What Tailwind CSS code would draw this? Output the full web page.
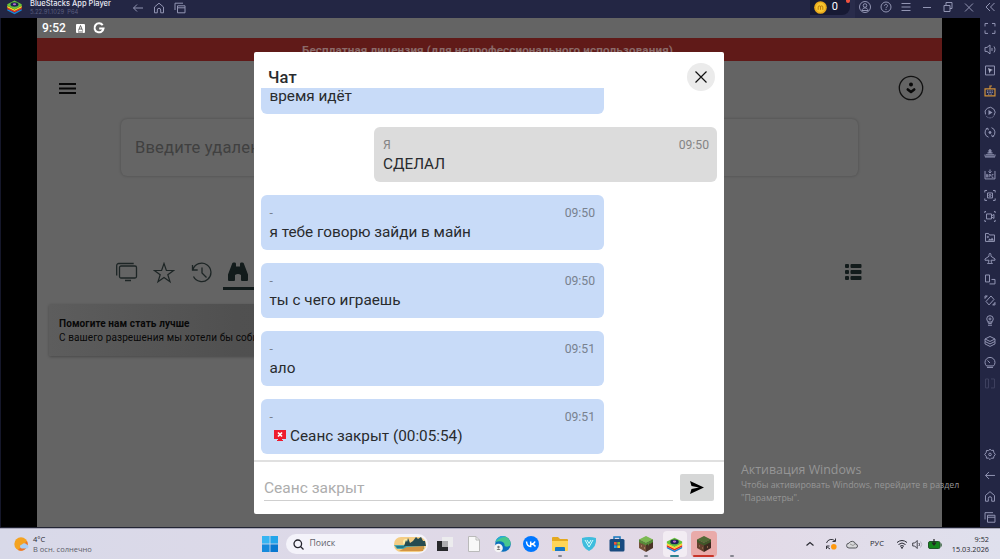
<!DOCTYPE html>
<html lang="ru">
  <head>
    <meta charset="UTF-8" />
    <title>BlueStacks App Player</title>
    <script src="https://cdn.jsdelivr.net/npm/@tailwindcss/browser@4"></script>
  </head>
  <body class="overflow-hidden bg-black font-['Roboto','Noto_Sans',sans-serif]">
    <!-- общие фигуры -->
    <svg class="hidden">
      <symbol id="home" viewBox="0 0 12 12"><path d="M1.500 5 6 1.200 10.500 5v5.800H7.700V8a1.700 1.700 0 0 0-3.400 0v2.800H1.500z" /></symbol>
      <symbol id="back" viewBox="0 0 12 12"><path d="M11 6H1.500M5 2.500 1.500 6 5 9.500" /></symbol>
      <symbol id="windows" viewBox="0 0 12 12"><path d="M3.500 3.800h7.500v7H3.500zM3.500 5.800H11M1 8V1.200h8" /></symbol>
      <symbol id="stack" viewBox="0 0 20 20">
        <path d="m1 12.500 9 4.500 9-4.500v2L10 19l-9-4.500z" fill="#1686d9" />
        <path d="m1 10.500 9 4.500 9-4.500v2L10 17l-9-4.500z" fill="#e02d24" />
        <path d="m1 8.500 9 4.500 9-4.500v2L10 15l-9-4.500z" fill="#ffd321" />
        <path d="m10 2 9 4.500v2L10 13 1 8.500v-2z" fill="#67c33b" />
        <ellipse cx="10" cy="7" rx="5" ry="2.800" fill="#1c2452" />
        <ellipse cx="10" cy="6.500" rx="2" ry="1.300" fill="#b66ad0" />
      </symbol>
    </svg>

    <div class="relative flex h-[559px] w-[1000px] flex-col">
      <!-- заголовок окна -->
      <header class="flex h-[18px] shrink-0 items-center bg-[#232644] text-[#9295b3]">
        <svg class="ml-[6px] h-4 w-[17px] -translate-y-[2px]"><use href="#stack" /></svg>
        <div class="ml-[7px] w-[102px] -translate-y-px font-['Inter',sans-serif] whitespace-nowrap">
          <div class="text-[7.500px] leading-[8px] font-medium text-[#e8e8f2]">BlueStacks App Player</div>
          <div class="text-[5.800px] leading-[8px] text-[#5b5e7f]">5.22.91.1029&nbsp; P64</div>
        </div>
        <div class="flex -translate-y-[1px] gap-[9px] fill-none stroke-[#9295b3]">
          <svg class="size-[12px]"><use href="#back" /></svg>
          <svg class="size-[12px]"><use href="#home" /></svg>
          <svg class="size-[12px]"><use href="#windows" /></svg>
        </div>
        <div class="relative ml-auto flex h-full w-[45px] items-start bg-[#292c4b]">
          <div class="flex h-[15px] w-10 items-center rounded-br-lg bg-[#171a34] pl-[4px]">
            <svg class="size-[13px]" viewBox="0 0 14 14">
              <circle cx="7" cy="7" r="6.800" fill="#e9a91c" />
              <circle cx="7" cy="7" r="5" fill="#f7c52f" />
              <path d="M4.500 9.500V6.500a1.200 1.200 0 0 1 2.500 0v3m0-3a1.200 1.200 0 0 1 2.500 0v3" fill="none" stroke="#b87508" />
            </svg>
            <span class="ml-[5px] text-[11px] text-white">0</span>
          </div>
          <div class="absolute top-0 right-[5px] h-[3px] w-[4px] rounded-b-full bg-[#f0523f]"></div>
        </div>
        <div class="ml-[4px] mr-[4px] flex -translate-y-[2px] items-center gap-[8.900px] fill-none stroke-[#9295b3]">
          <svg class="size-[12px]" viewBox="0 0 12 12"><circle cx="6" cy="6" r="5.500" /><circle cx="6" cy="4.500" r="1.800" /><path d="M3 9.500c.3-3.500 5.700-3.500 6 0z" /></svg>
          <svg class="size-[12px]" viewBox="0 0 12 12"><circle cx="6" cy="6" r="5" /><path d="M4.500 4.800c0-2 3-2 3 0C7.500 6 6 5.800 6 7.200M6 8v1" /></svg>
          <svg class="size-[12px]" viewBox="0 0 12 12"><path d="M1.500 2.500h9M1.500 6h9M1.500 9.500h9" /></svg>
          <svg class="size-[12px]" viewBox="0 0 12 12"><path d="M2 6.500h8" /></svg>
          <svg class="size-[12px]" viewBox="0 0 12 12"><path d="M2 4.500h6v6H2zM4 4.500v-3h6v6H8" /></svg>
          <svg class="size-[12px]" viewBox="0 0 12 12"><path d="m2 2.500 8 8m0-8-8 8" /></svg>
          <svg class="size-[12px]" viewBox="0 0 12 12"><path d="M6 2 2 6l4 4m4.500-8-4 4 4 4" /></svg>
        </div>
      </header>

      <main class="flex h-[510px] shrink-0 border-b border-[#222433]">
        <div class="w-[37px] border-l border-[#15172a] bg-black"></div>

        <!-- экран приложения -->
        <section class="w-[905px] bg-[#646464]">
          <div class="flex h-5 items-center pl-[5px] text-white">
            <span class="text-[12px] font-medium tracking-[.1px]">9:52</span>
            <svg class="ml-[10px] size-[9px]" viewBox="0 0 9 9"><rect width="9" height="9" rx="1" fill="#fff" /><path d="m2.500 6.500 2-5 2 5M3.200 5h2.600M2 8h5" fill="none" stroke="#555" stroke-width=".9" /></svg>
            <svg class="ml-[8px] size-[12px]" viewBox="0 0 12 12"><path d="M9.700 3.200A4.500 4.500 0 1 0 10.500 6.500H6.200" fill="none" stroke="#fff" stroke-width="2" /></svg>
          </div>
          <div class="h-[23px] bg-[#601a18] text-center text-[11.700px] leading-[25px] font-bold tracking-[.1px] whitespace-nowrap text-[#8b6a69]">
            <span class="mr-1">Бесплатная лицензия (для непрофессионального использования)</span>
          </div>
          <div class="flex h-[58px] items-center justify-between pr-[18px] pl-[22px]">
            <svg class="h-[13px] w-[17px] -translate-y-[2px]" viewBox="0 0 17 13"><path d="M0 2h17M0 6.500h17M0 11h17" stroke="#080808" stroke-width="1.800" /></svg>
            <svg class="size-[26px] -translate-y-[2px]" viewBox="0 0 26 26"><circle cx="13" cy="13" r="11.700" fill="none" stroke="#111" stroke-width="1.300" /><circle cx="13" cy="9.500" r="2" fill="#080808" /><path d="m9.800 14.500 3.200 2.500 3.200-2.500" fill="none" stroke="#080808" stroke-width="2.600" stroke-linecap="round" stroke-linejoin="round" /></svg>
          </div>
          <div class="mr-[84px] ml-[84px] h-[57px] rounded-md bg-[#656565] pl-[14px] text-[16.500px] leading-[57px] tracking-[.2px] text-[#404040] shadow-[0_0_3px_rgba(0,0,0,.25)]">
            Введите удаленный ID
          </div>
          <div class="mt-[82px] flex h-[32px] pr-[80px] pl-[79px] text-[#1d2525]">
            <svg class="mt-[4px] size-[22px]" viewBox="0 0 22 22" fill="none" stroke="currentColor" stroke-width="1.300"><rect x="3.500" y="4" width="17" height="12" rx="1.500" /><path d="M.7 13.500V3.500a2 2 0 0 1 2-2h15M9 18.500h6" /></svg>
            <svg class="mt-[4px] ml-[15px] size-[22px]" viewBox="0 0 22 22" fill="none" stroke="currentColor" stroke-width="1.200"><path d="m11 1.500 2.400 7h7.200l-5.800 4.300 2.200 7-6-4.300-6 4.300 2.200-7L1.400 8.500h7.200z" /></svg>
            <svg class="mt-[4px] ml-[16px] size-[22px]" viewBox="0 0 22 22" fill="none" stroke="currentColor" stroke-width="1.300"><path d="M2 7.500a9.200 9.200 0 1 1 .5 7M1.500 3v5h5.200M11 5.500V11l4.500 4.500" /></svg>
            <div class="ml-[10px] w-[33px] border-b-[3px] border-[#121b1b] pt-[3px] pl-[4px]">
              <svg class="size-[22px]" viewBox="0 0 22 22" fill="#121b1b"><path d="M5 3q0-1.500 1.500-1.500H8Q9 1.500 9 3v2.500h4V3q0-1.500 1-1.500h1.500Q17 1.500 17 3l4 10.500V19q0 1-1 1h-5q-1 0-1-1v-5q-3-2-6 0v5q0 1-1 1H2q-1 0-1-1v-5.500z" /></svg>
            </div>
            <svg class="mt-[5px] ml-auto h-[18px] w-[17px]" viewBox="0 0 17 18" fill="#121b1b"><rect y="1" width="4" height="4" rx="1" /><rect x="5.500" y="1" width="11" height="4" rx="1" /><rect y="7" width="4" height="4" rx="1" /><rect x="5.500" y="7" width="11" height="4" rx="1" /><rect y="13" width="4" height="4" rx="1" /><rect x="5.500" y="13" width="11" height="4" rx="1" /></svg>
          </div>
          <div class="mt-[14px] ml-3 h-[52px] w-[620px] rounded-xs bg-linear-to-r from-[#5d5d5d] via-[#505050] via-30% to-[#484848] pt-[13px] pl-[10px] text-[10px] leading-[14px] tracking-[.1px] text-[#080808] shadow-[0_1px_3px_rgba(0,0,0,.28)]">
            <div class="font-bold">Помогите нам стать лучше</div>
            <div>С вашего разрешения мы хотели бы собирать данные</div>
          </div>
        </section>

        <div class="w-[38px] bg-black"></div>

        <!-- панель инструментов -->
        <aside class="flex w-5 flex-col bg-[#232644] fill-none stroke-[#9295b3]">
          <svg class="h-[20.900px] w-5" viewBox="-4 -4.500 20 21"><path d="M1 4V1h3m4 0h3v3m0 4v3H8m-4 0H1V8" /></svg>
          <svg class="h-[20.900px] w-5" viewBox="-4 -4.500 20 21"><path d="M1 4h2l3-2.500v9L3 8H1zM8 4.500v3M10 3c1.300 2 1.300 4 0 6" /></svg>
          <svg class="h-[20.900px] w-5" viewBox="-4 -4.500 20 21"><path d="M1.500 1.500h9v9h-9z" /><path d="m4 3.500 5 2-2.300.8L5.600 9z" fill="#b3b5cc" stroke="none" /></svg>
          <svg class="h-[20.900px] w-5" viewBox="-4 -4.500 20 21"><path d="M1 3.500h10v7H1zM6 3.500v-3h2" stroke="#d0913a" stroke-width="1.200" /><path d="M3 5.500h6M3 7h6M4 8.700h4" stroke-dasharray="1 .6" /></svg>
          <svg class="h-[20.900px] w-5" viewBox="-4 -4.500 20 21"><path d="M1.500 8A5 5 0 1 1 10 9" /><path d="M2 9.500a5 5 0 0 0 8 0" stroke-dasharray="1 1" /><path d="m4.500 3.500 4 2.500-4 2.500z" fill="#9295b3" stroke="none" /></svg>
          <svg class="h-[20.900px] w-5" viewBox="-4 -4.500 20 21"><path d="M4.500 10.800A5 5 0 0 1 3.500 1.700M1.800 2.500l2-.8.500 2M7.500 1.200a5 5 0 0 1 1 9.100M10.200 9.500l-2 .8-.5-2" /><circle cx="6" cy="6" r="1" fill="#9295b3" /></svg>
          <svg class="h-[20.900px] w-5" viewBox="-4 -4.500 20 21"><path d="M1 9.500h10M2 7.500h8M3.500 5.500h5M6 2v4" stroke-width="1.300" /><circle cx="6" cy="3.500" r="1.200" /><path d="M1 7v2m10-2v2" /></svg>
          <svg class="h-[20.900px] w-5" viewBox="-4 -4.500 20 21"><path d="M1 2.500v8h10v-8M6 1v3M4.500 3 6 4.500 7.500 3" /><path d="M2.500 9V6h1v3m1.500 0V6h1.500v1.500H5M9.500 6H8v3h1.500" stroke-width=".8" /></svg>
          <svg class="h-[20.900px] w-5" viewBox="-4 -4.500 20 21"><path d="M.8 3V1H3m6 0h2.200v2m0 6v2H9m-6 0H.8V9M3.500 3.500h5v5h-5z" /><circle cx="6" cy="6" r="1" /></svg>
          <svg class="h-[20.900px] w-5" viewBox="-4 -4.500 20 21"><path d="M.8 2.500V1H2m8 0h1.200v1.500m0 7V11H10m-8 0H.8V9.500M2.500 3.500h5v5h-5zM7.500 5.500 10 4v4L7.500 6.500" /></svg>
          <svg class="h-[20.900px] w-5" viewBox="-4 -4.500 20 21"><path d="M1.500 10V2h3l1 1.500h5V10z" /><path d="m4 9 1.500-2L7 8l1-2 2 3z" fill="#9295b3" stroke="none" /><circle cx="3.800" cy="5.500" r=".7" /></svg>
          <svg class="h-[20.900px] w-5" viewBox="-4 -4.500 20 21"><path d="M6 .8c-1 0-1 1.700-1 3L1 6.500v1.300h4L4.500 10l-1 1h5l-1-1L7 7.800h4V6.500L7 3.800c0-1.300 0-3-1-3z" /></svg>
          <svg class="h-[20.900px] w-5" viewBox="-4 -4.500 20 21"><path d="M1.500 1.500h4v7h-4zM7.500 6h3.500v4.500H5.500" /></svg>
          <svg class="h-[20.900px] w-5" viewBox="-4 -4.500 20 21"><path d="m2 7 5-5.500L10 5l-5 5.500zM1 4V1.500h2.500M1 4l2-2.500M11 8v2.500H8.500M11 8l-2 2.500" /></svg>
          <svg class="h-[20.900px] w-5" viewBox="-4 -4.500 20 21"><circle cx="6" cy="4.500" r="3.300" /><circle cx="6" cy="4.500" r="1" /><path d="M4 7.500 4.500 9h3L8 7.500M4 10.800h4" /></svg>
          <svg class="h-[20.900px] w-5" viewBox="-4 -4.500 20 21"><path d="m1 3.500 5-2.500 5 2.500L6 6zM1 3.500V6l5 2.500L11 6V3.500M1 6v2.500L6 11l5-2.500V6" /></svg>
          <svg class="h-[20.900px] w-5" viewBox="-4 -4.500 20 21"><path d="M2.500 9.500a5 5 0 1 1 7 0zM6 6.500 3.500 4M3 11h6" /></svg>
          <svg class="h-[20.900px] w-5" viewBox="-4 -4.500 20 21"><path d="M1.500 1.500h3v9h-3zM7 1.500h3.500v9H7" stroke="#3e4160" /></svg>
          <div class="mt-auto -mb-px flex flex-col">
            <svg class="h-[20.900px] w-5" viewBox="-4 -4.500 20 21"><path d="M6 .8 7.500 2l2-.2.300 2L11.300 6 10 7.800l-.5 2-2-.1L6 11.200 4.500 9.700l-2 .1-.3-2L.7 6l1.500-2 .3-2 2 .1z" /><circle cx="6" cy="6" r="1.300" /></svg>
            <svg class="h-[20.900px] w-5" viewBox="-4 -4.500 20 21"><use href="#back" width="12" height="12" /></svg>
            <svg class="h-[20.900px] w-5" viewBox="-4 -4.500 20 21"><use href="#home" width="12" height="12" /></svg>
            <svg class="h-[20.900px] w-5" viewBox="-4 -4.500 20 21"><use href="#windows" width="12" height="12" /></svg>
          </div>
        </aside>
      </main>

      <!-- панель задач -->
      <footer class="flex h-[31px] items-center border-t border-[#aaaabc] bg-linear-to-r from-[#d8d9e9] via-[#e3d9e6] via-70% to-[#dfe0ed] font-['Open_Sans','Noto_Sans',sans-serif] text-[#282932]">
        <svg class="ml-[13px] size-4" viewBox="0 0 16 16"><circle cx="8" cy="8" r="6.700" fill="#f4a321" /><path d="M8 14.700A6.700 6.700 0 0 0 14 5L5 14q1.400.7 3 .7" fill="#ed732c" /><path d="M9 12.500a2 2 0 0 1 0-4 3 3 0 0 1 5 .3 1.900 1.900 0 0 1 0 3.700z" fill="#a9cff7" /></svg>
        <div class="ml-1 w-[223px] text-[7.500px] leading-[10.500px]">
          <div>4°C</div>
          <div class="text-[#5c5d68]">В осн. солнечно</div>
        </div>
        <div class="flex items-center">
          <svg class="ml-[5.500px] size-4" viewBox="0 0 16 16"><path d="M0 0h7.600v7.600H0z" fill="#37b5f2" /><path d="M8.400 0H16v7.600H8.400z" fill="#23a5ea" /><path d="M0 8.400h7.600V16H0z" fill="#168bdc" /><path d="M8.400 8.400H16V16H8.400z" fill="#0878d0" /></svg>
          <div class="ml-[8px] flex h-5 w-[142px] items-center overflow-hidden rounded-full bg-[#f4f3fa] pl-[7px]">
            <svg class="size-[11px]" viewBox="0 0 11 11" fill="none" stroke="#25252d" stroke-width="1.300"><circle cx="4.800" cy="4.800" r="3.800" /><path d="m7.500 7.500 3 3" /></svg>
            <span class="ml-[6px] text-[8.700px] text-[#62626b]">Поиск</span>
            <svg class="mr-[2px] ml-auto h-4 w-8" viewBox="0 0 32 16">
              <rect y="1" width="32" height="15" rx="7" fill="#f4cd84" />
              <circle cx="12" cy="6" r="3" fill="#fff1ac" />
              <path d="M0 9h30v4H3z" fill="#4ba6ac" />
              <path d="m10 10 2-6 1 2 1-4 2 5 3-2 3-4 2 2 3-2 2 4 2 0 1 5z" fill="#254b50" />
              <path d="m5 15 8-4 17-1-1 5z" fill="#d39543" /><path d="M2 10h10l-3 2H3z" fill="#247888" />
            </svg>
          </div>
        </div>
        <div class="ml-[3.500px] flex h-full items-center">
          <div class="flex w-[28.700px] justify-center"><svg class="size-4" viewBox="0 0 16 16"><path d="M0 5h11v10H0z" fill="#27282b" /><path d="M5 1h11v10H5z" fill="#ececee" /><path d="M5 5h6v6H5z" fill="#adadb0" /></svg></div>
          <div class="flex w-[28.700px] justify-center"><svg class="size-4" viewBox="0 0 16 16"><path d="M2.500.5H10L13.500 4v11.500h-11z" fill="#f8f8f8" stroke="#bababa" /><path d="M10 .5V4h3.500" fill="none" stroke="#bababa" /></svg></div>
          <div class="flex w-[28.700px] justify-center">
            <svg class="size-[17px]" viewBox="0 0 17 17"><circle cx="9" cy="8" r="7.800" fill="#0b70bd" /><path d="M1.500 6C3-1 14-2 16.500 6c1 4-3 6-6 4 1-4-4-6-9-4" fill="#47c78e" /><path d="M1.500 6C3 0 9-1 12 1c-5 0-8 2-10.500 5" fill="#28a9d8" /><circle cx="4.500" cy="12" r="4.300" fill="#f5f5f5" /><circle cx="4.500" cy="11" r="1.200" fill="#777" /><path d="M2.500 14q2-3 4 0z" fill="#777" /></svg>
          </div>
          <div class="flex w-[28.700px] justify-center"><svg class="size-4" viewBox="0 0 16 16"><circle cx="8" cy="8" r="8" fill="#07f" /><path d="M3.500 5.500c.3 3.500 2 5 4.200 5v-5m4.300 0Q11 8 8.500 8q2.700.5 4 2.500" fill="none" stroke="#fff" stroke-width="1.500" /></svg></div>
          <div class="relative flex h-full w-[28.700px] items-center justify-center">
            <svg class="size-4" viewBox="0 0 16 16"><path d="M0 2q0-1 1-1h5l2 2h7q1 0 1 1v10H0z" fill="#e4a91f" /><path d="M0 5h16v9q0 1-1 1H1q-1 0-1-1z" fill="#ffd557" /><path d="M3 12q0-1 1-1h8q1 0 1 1v3H3z" fill="#1678c6" /></svg>
            <div class="absolute bottom-[2px] h-[2px] w-1 rounded bg-[#85858f]"></div>
          </div>
          <div class="flex w-[28.700px] justify-center"><svg class="size-4" viewBox="0 0 16 16"><path d="M1 2q7-2 14 0 1 9-7 13Q0 11 1 2" fill="#3fbddd" /><path d="m4 4 4 7 4-7M6 4l2 3.500L10 4" fill="none" stroke="#d6ffff" /></svg></div>
          <div class="flex w-[28.700px] justify-center"><svg class="size-4" viewBox="0 0 16 16"><path d="M5 4V1h6v3" fill="none" stroke="#1678bd" stroke-width="1.500" /><rect x=".5" y="3" width="15" height="12.500" rx="1.500" fill="#194b80" /><path d="M5 6h2.700v2.700H5z" fill="#ef573b" /><path d="M8.300 6H11v2.700H8.300z" fill="#82bd35" /><path d="M5 9.300h2.700V12H5z" fill="#29a9e8" /><path d="M8.300 9.300H11V12H8.300z" fill="#ffc52e" /></svg></div>
          <div class="relative flex h-full w-[28.700px] items-center justify-center">
            <svg class="size-4" viewBox="0 0 16 16"><path d="m8 0 7 3.500L8 7 1 3.500z" fill="#7cb953" /><path d="M1 3.500 8 7v9l-7-4z" fill="#75513a" /><path d="M15 3.500 8 7v9l7-4z" fill="#4b3427" /><path d="M1 3.500 8 7v3L6 8v1L4 7v1L1 6zM15 3.500 8 7v2l2-1v2l2-3v1l3-2z" fill="#558d38" /><path d="M3 9h1v2H3zm3 2h1v2H6z" fill="#a27b5c" /></svg>
            <div class="absolute bottom-[2px] h-[2px] w-1 rounded bg-[#85858f]"></div>
          </div>
          <div class="relative flex h-[26px] w-[28.700px] items-center justify-center px-[2px]">
            <div class="flex h-full w-[25px] items-center justify-center rounded-sm bg-[#f2ecf3]"><svg class="size-[17px]"><use href="#stack" /></svg></div>
            <div class="absolute bottom-0 h-[2px] w-[9px] rounded bg-[#2e8290]"></div>
          </div>
          <div class="relative flex h-[26px] w-[28.700px] items-center justify-center">
            <div class="flex h-full w-[26px] items-center justify-center rounded-sm bg-[#e9aaa9]">
              <svg class="size-4" viewBox="0 0 16 16"><path d="m8 0 7 3.500L8 7 1 3.500z" fill="#526b36" /><path d="M1 3.500 8 7v9l-7-4z" fill="#65402e" /><path d="M15 3.500 8 7v9l7-4z" fill="#3d291f" /><path d="M1 3.500 8 7v2.500L1 6zM15 3.500 8 7v2.500L15 6z" fill="#3f5729" /><path d="M3 9h1v2H3zm3 2h1v2H6zm5-1h1v2h-1z" fill="#875f45" /></svg>
            </div>
            <div class="absolute bottom-0 h-[2px] w-[21px] rounded bg-[#c93429]"></div>
          </div>
          <div class="relative h-full w-[28.700px]"><div class="absolute bottom-[2px] left-3 h-[2px] w-1 rounded bg-[#85858f]"></div></div>
        </div>
        <div class="mr-[11px] ml-auto flex items-center">
          <svg class="size-[10px]" viewBox="0 0 10 10" fill="none" stroke="#292a31" stroke-width="1.200"><path d="m1.500 6.500 3.500-3 3.500 3" /></svg>
          <svg class="ml-[10px] size-[12px]" viewBox="0 0 12 12" fill="none" stroke="#34353c"><path d="M1.500 5A5 5 0 0 1 10 3M10.500.5V3.500H7.500M1.500 11V8h3M1.500 8.500 5 11" /><circle cx="8.800" cy="8.800" r="2.800" fill="#ff990f" stroke="none" /></svg>
          <svg class="ml-[9px] size-[12px]" viewBox="0 0 12 12"><path d="M3 10a2.400 2.400 0 0 1 0-4.800 3.500 3.500 0 0 1 6.500.8A2 2 0 0 1 9.500 10z" fill="#d7d7da" stroke="#55565c" /><path d="m4 6 3 1.500 2-1.500" fill="none" stroke="#999" /></svg>
          <span class="ml-[12px] w-[15px] text-[7.500px]">РУС</span>
          <svg class="ml-[11px] size-[12px]" viewBox="0 0 12 12" fill="none" stroke="#282932"><path d="M1 4.500q5-4 10 0M2.500 6.500q3.500-3 7 0M4 8.300q2-1.500 4 0" /><circle cx="6" cy="9.700" r=".6" fill="#282932" /></svg>
          <svg class="ml-[4px] size-[11px]" viewBox="0 0 11 11" fill="none" stroke="#44454d"><path d="M.7 4h2l2.500-2.500v8L2.700 7h-2zM7 4q1 1.500 0 3" /><path d="M8.500 2.500q2.500 3 0 6" stroke="#b4b4bd" /></svg>
          <svg class="ml-[5px] h-[11px] w-[14px]" viewBox="0 0 14 11"><rect x=".5" y="2.500" width="11.500" height="7" rx="1.500" fill="#13851c" stroke="#24552b" /><path d="M13.200 4.500v3" stroke="#24552b" /><path d="M6 0v5M4 3.500 6 6l2-2.500" fill="none" stroke="#222" stroke-width="1.200" /></svg>
          <div class="ml-[5px] w-[42px] text-right text-[7.300px] leading-[10.500px]">
            <div>9:52</div>
            <div class="whitespace-nowrap">15.03.2026</div>
          </div>
        </div>
      </footer>

      <!-- окно чата поверх приложения -->
      <div class="absolute top-[52px] left-[254px] flex h-[462px] w-[470px] flex-col rounded-xs bg-white text-[#292b2e]">
        <div class="flex h-[36px] shrink-0 items-start justify-between pr-[9.500px] pl-[14px]">
          <h1 class="pt-[14px] text-[16.500px] leading-6 font-medium tracking-[.2px]">Чат</h1>
          <button class="mt-[10.500px] flex size-[28px] shrink-0 items-center justify-center rounded-full bg-[#ebebeb]">
            <svg class="size-3" viewBox="0 0 12 12" stroke="#111" stroke-width="1.200"><path d="m.5.5 11 11m0-11-11 11" /></svg>
          </button>
        </div>
        <div class="flex h-[374px] shrink-0 flex-col justify-end gap-[13.500px] border-b-2 border-[#e0e0e0] px-[7px] pb-[6.500px] text-[15.300px] leading-5">
          <div class="h-[25.500px] w-[343px] shrink-0 rounded-b-md bg-[#c8dbf8] px-[8.500px] leading-[17px]">время идёт</div>
          <div class="h-[54.500px] w-[343px] shrink-0 self-end rounded-md bg-[#dcdcdc] pt-[8px] pr-2 pl-[9px]">
            <div class="flex justify-between text-[12.200px] text-[#858585]"><span>Я</span><span>09:50</span></div>
            <div class="-mt-[1px]">СДЕЛАЛ</div>
          </div>
          <div class="h-[54.500px] w-[343px] shrink-0 rounded-md bg-[#c8dbf8] pt-[8px] pr-[9px] pl-[8.500px]">
            <div class="flex justify-between text-[12.200px] text-[#78828f]"><span>-</span><span>09:50</span></div>
            <div class="-mt-[1px]">я тебе говорю зайди в майн</div>
          </div>
          <div class="h-[54.500px] w-[343px] shrink-0 rounded-md bg-[#c8dbf8] pt-[8px] pr-[9px] pl-[8.500px]">
            <div class="flex justify-between text-[12.200px] text-[#78828f]"><span>-</span><span>09:50</span></div>
            <div class="-mt-[1px]">ты с чего играешь</div>
          </div>
          <div class="h-[54.500px] w-[343px] shrink-0 rounded-md bg-[#c8dbf8] pt-[8px] pr-[9px] pl-[8.500px]">
            <div class="flex justify-between text-[12.200px] text-[#78828f]"><span>-</span><span>09:51</span></div>
            <div class="-mt-[1px]">ало</div>
          </div>
          <div class="h-[54.500px] w-[343px] shrink-0 rounded-md bg-[#c8dbf8] pt-[8px] pr-[9px] pl-[8.500px]">
            <div class="flex justify-between text-[12.200px] text-[#78828f]"><span>-</span><span>09:51</span></div>
            <div class="-mt-[1px] flex items-center">
              <svg class="mr-[4px] ml-[4.500px] h-[11px] w-[12px] -translate-y-[1px]" viewBox="0 0 12 11"><path d="M0 0h12v9H8v1h1v1H3v-1h1V9H0z" fill="#ee1c2e" /><path d="m4 2.500 4 4m0-4-4 4" stroke="#fff" stroke-width="1.700" /></svg>
              Сеанс закрыт (00:05:54)
            </div>
          </div>
        </div>
        <div class="flex items-start pt-[12px] pl-[10px]">
          <div class="h-[27px] w-[409px] border-b border-[#cfcfcf] text-[15.500px] leading-7 text-[#adadad]">Сеанс закрыт</div>
          <button class="ml-[7px] flex h-[27px] w-[34px] items-center justify-center rounded-xs bg-[#d6d7d7]">
            <svg class="h-[13px] w-[14px]" viewBox="0 0 14 13"><path d="M0 0 14 6.500 0 13l1.500-5L9 6.500 1.500 5z" fill="#000" /></svg>
          </button>
        </div>
      </div>

      <!-- водяной знак системы -->
      <div class="absolute top-[461px] left-[741px] font-['Open_Sans','Noto_Sans',sans-serif] whitespace-nowrap text-[#969696]">
        <div class="text-[12.400px] leading-[17px]">Активация Windows</div>
        <div class="pt-px text-[8.780px] leading-[13px]">Чтобы активировать Windows, перейдите в раздел<br />"Параметры".</div>
      </div>
    </div>
  </body>
</html>
